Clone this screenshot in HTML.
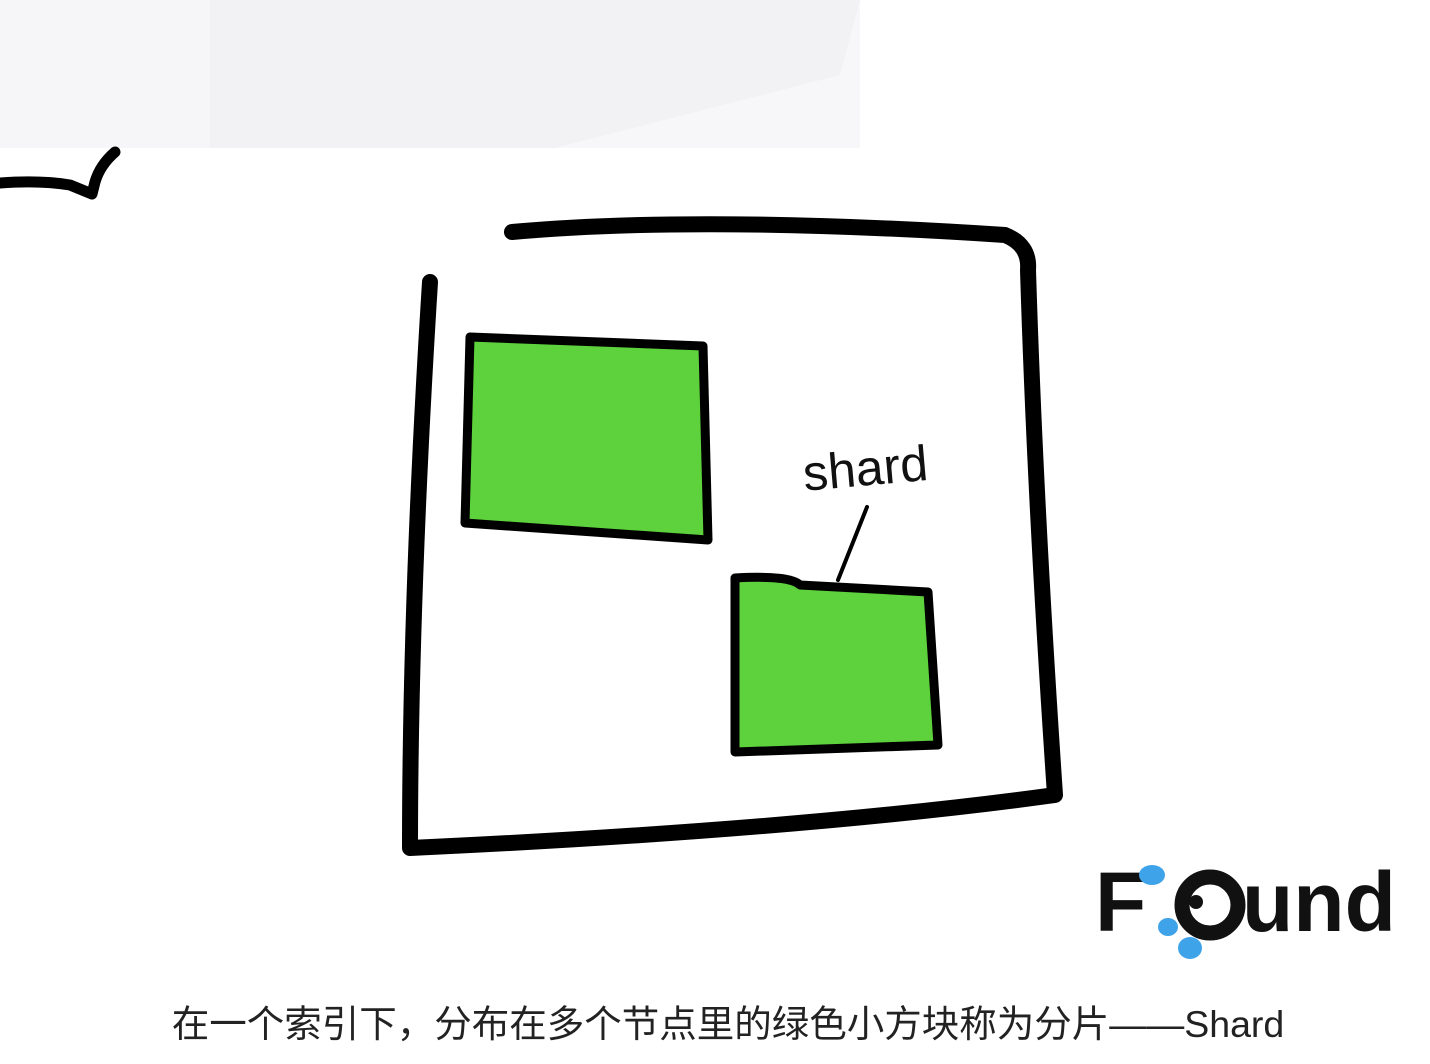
<!DOCTYPE html>
<html><head><meta charset="utf-8"><style>
html,body{margin:0;padding:0;width:1430px;height:1064px;overflow:hidden;background:#fff;}
.cap{position:absolute;left:0;width:1456px;top:993px;text-align:center;font-family:"Liberation Sans","Noto Sans CJK SC",sans-serif;font-size:37.5px;color:#222;}
</style></head><body>
<svg width="1430" height="1064" style="position:absolute;left:0;top:0">
<rect x="0" y="0" width="860" height="148" fill="#f2f2f4"/>
<rect x="0" y="0" width="210" height="148" fill="#f6f6f8"/>
<path d="M555 148 L840 75 L860 0 L860 148 Z" fill="#f7f7f9"/>
<g fill="none" stroke="#000" stroke-linecap="round" stroke-linejoin="round">
<path d="M0 183 Q40 180 70 185 L92 194 L95 182 Q100 165 115 152" stroke-width="11"/>
<path d="M512 232 Q700 215 1005 235 Q1030 245 1028 270 Q1035 500 1055 795 Q800 830 410 848 Q410 600 430 282" stroke-width="16"/>
<path d="M470 337 L703 346 L708 540 L465 523 Z" fill="#5dd23c" stroke-width="9"/>
<path d="M735 578 Q790 575 800 585 L928 592 L938 745 L735 752 Z" fill="#5dd23c" stroke-width="9"/>
<path d="M867 507 L838 580" stroke-width="4"/>
</g>
<text x="803" y="485" font-family="Liberation Sans, sans-serif" font-size="50" fill="#111" transform="rotate(-5 870 470)">shard</text>
<g>
<text x="1095" y="931" font-family="Liberation Sans, sans-serif" font-weight="bold" font-size="84" fill="#111">F</text>
<circle cx="1210" cy="905" r="28" fill="none" stroke="#111" stroke-width="15"/>
<circle cx="1196" cy="902" r="7" fill="#111"/>
<text x="1242" y="931" font-family="Liberation Sans, sans-serif" font-weight="bold" font-size="84" fill="#111">und</text>
<ellipse cx="1152" cy="875" rx="13" ry="10" fill="#3fa3ea"/>
<ellipse cx="1168" cy="927" rx="10" ry="9" fill="#3fa3ea"/>
<ellipse cx="1190" cy="948" rx="12" ry="11" fill="#3fa3ea"/>
</g>
</svg>
<div class="cap">在一个索引下，分布在多个节点里的绿色小方块称为分片——Shard</div>
</body></html>
